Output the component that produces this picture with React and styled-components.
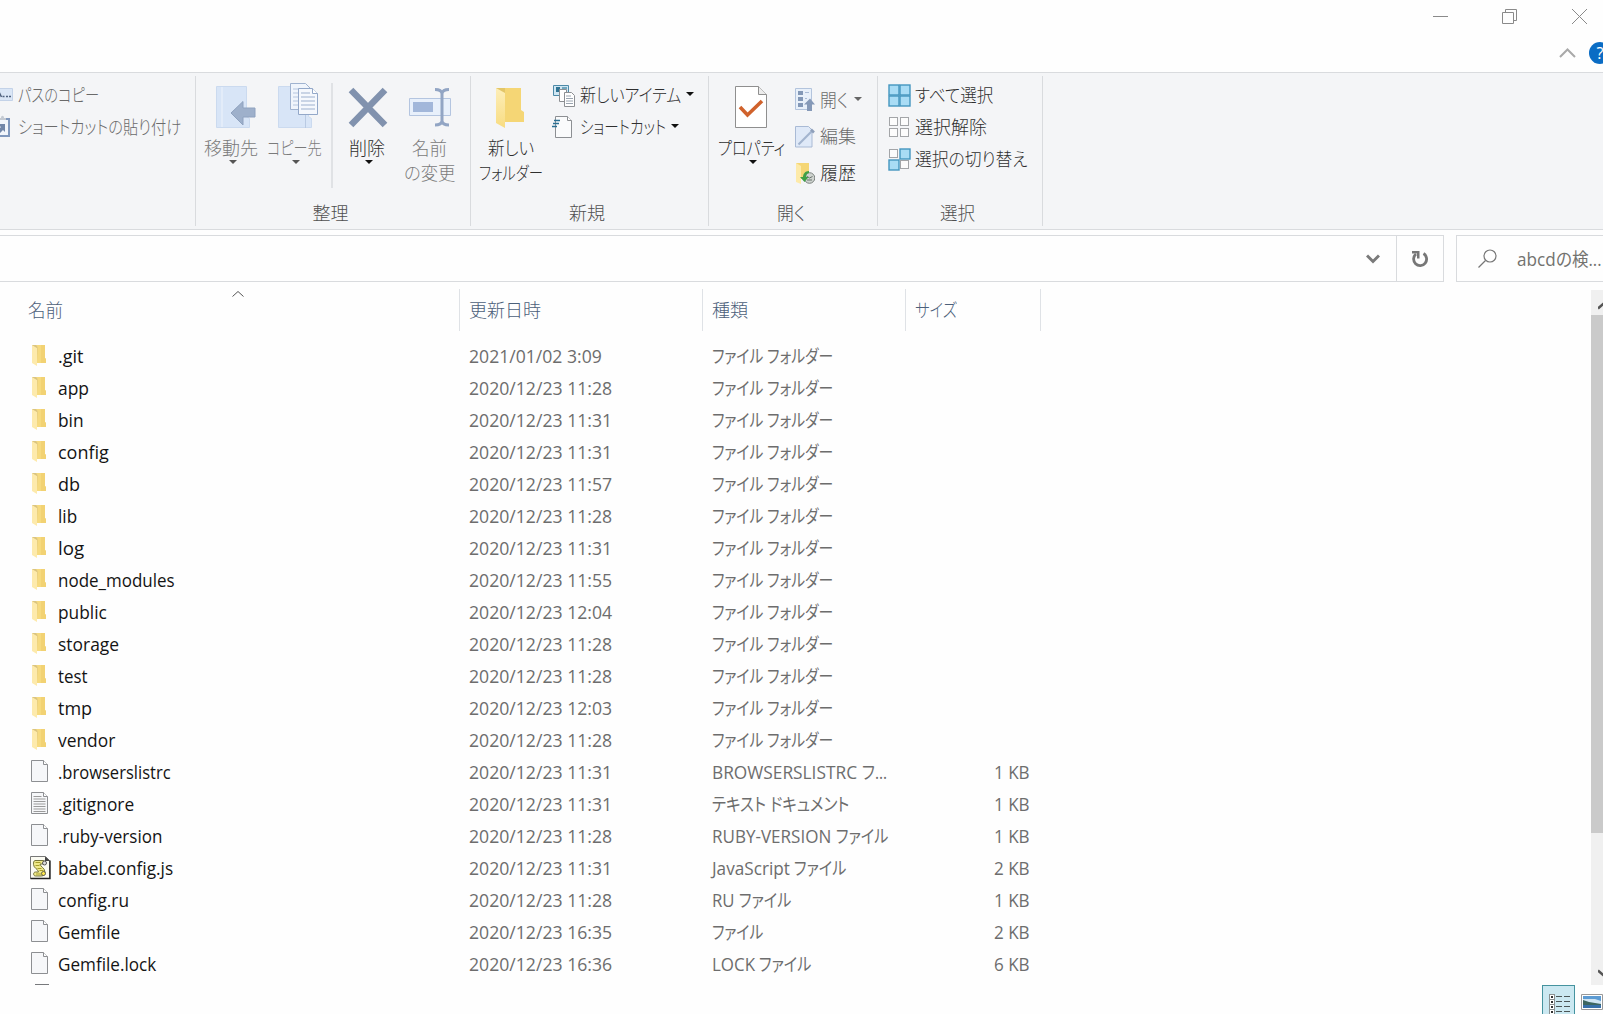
import React, { useLayoutEffect, useRef, useState } from 'react';
import styled, { createGlobalStyle } from 'styled-components';

const colors = {
  text: '#2f2f2f',
  muted: '#6a6a6a',
  disabled: '#7b7b7b',
  detail: '#6d6d6d',
  header: '#4c607a',
  line: '#d9dbde',
  ribbon: '#f4f5f7',
};

const GlobalStyle = createGlobalStyle`
  * {
    box-sizing: border-box;
  }
  body {
    margin: 0;
    background: #fefefe;
    overflow: hidden;
    font-family: 'Open Sans', 'Noto Sans CJK JP', sans-serif;
    font-size: 18px;
    line-height: 25px;
    color: ${colors.text};
  }
  svg {
    display: block;
    flex: none;
  }
`;

const FitBox = styled.span`
  display: inline-block;
  flex: none;
  height: 25px;
  white-space: pre;
  text-align: left;
`;

const FitInner = styled.span`
  display: inline-block;
  transform-origin: 0 50%;
  font-feature-settings: 'palt';
`;

// condenses a label so that it takes exactly the given width
const Fit = ({ width, children }) => {
  const ref = useRef(null);
  const [scale, setScale] = useState(1);

  useLayoutEffect(() => {
    setScale(width / ref.current.offsetWidth);
  }, [width, children]);

  return (
    <FitBox style={{ width }}>
      <FitInner ref={ref} style={{ transform: `scaleX(${scale})` }}>
        {children}
      </FitInner>
    </FitBox>
  );
};

const Window = styled.div`
  width: 1603px;
  height: 1014px;
  display: flex;
  flex-direction: column;
  overflow: hidden;
`;

/* ---------- title bar ---------- */

const TitleBar = styled.header`
  height: 72px;
  flex: none;
`;

const WindowButtons = styled.div`
  display: flex;
  justify-content: flex-end;
  gap: 54px;
  height: 33px;
  padding: 9px 15px 0 0;
`;

const RibbonControls = styled.div`
  display: flex;
  justify-content: flex-end;
  align-items: center;
  gap: 13px;
  height: 40px;
  margin-right: -8px;
`;

const HelpBadge = styled.span`
  width: 22px;
  height: 22px;
  border-radius: 50%;
  background: #0a6cc4;
  color: white;
  font-size: 16px;
  line-height: 22px;
  text-align: center;
`;

/* ---------- ribbon ---------- */

const Ribbon = styled.section`
  display: flex;
  flex: none;
  height: 158px;
  padding: 3px 0;
  background: ${colors.ribbon};
  border-top: 1px solid ${colors.line};
  border-bottom: 1px solid ${colors.line};
  font-weight: 300;
`;

const Group = styled.div`
  display: flex;
  flex-direction: column;
  width: ${({ $width }) => $width}px;
  border-right: 1px solid ${colors.line};
`;

const GroupBody = styled.div`
  display: flex;
  height: 125px;
  padding-left: ${({ $left }) => $left || 0}px;
`;

const GroupLabel = styled.div`
  display: flex;
  justify-content: center;
  padding-right: 5px;
  color: #505050;
`;

const BigButton = styled.div`
  display: flex;
  flex-direction: column;
  align-items: center;
  width: ${({ $width }) => $width}px;
  padding-top: 7px;
  color: ${({ $disabled }) => ($disabled ? colors.disabled : colors.text)};

  > svg:first-child {
    margin-bottom: 3px;
  }

  > svg:last-child {
    margin: -1px 0 0 4px;
  }
`;

const Divider = styled.div`
  width: 2px;
  height: 105px;
  margin: 7px 4px 0 5px;
  background: #e0e2e5;
`;

const SmallColumn = styled.div`
  display: flex;
  flex-direction: column;
  padding-top: ${({ $top }) => $top}px;
  margin-left: ${({ $left }) => $left || 0}px;
`;

const SmallButton = styled.div`
  display: flex;
  align-items: center;
  height: ${({ $height }) => $height || 32}px;
  gap: ${({ $gap }) => $gap || 5}px;
  color: ${({ $muted }) => ($muted ? colors.muted : colors.text)};

  > svg:last-child {
    margin: 0 0 2px 1px;
  }
`;

const Caret = ({ color = '#111' }) => (
  <svg width="8" height="4" viewBox="0 0 8 4">
    <path d="M0 0h8L4 4z" fill={color} />
  </svg>
);

/* ---------- address bar ---------- */

const AddressRow = styled.div`
  display: flex;
  flex: none;
  gap: 12px;
  height: 53px;
  padding-top: 5px;
`;

const AddressBox = styled.div`
  display: flex;
  justify-content: flex-end;
  width: 1444px;
  height: 47px;
  border: 1px solid ${colors.line};
  border-left: 0;
`;

const AddressButton = styled.div`
  display: flex;
  align-items: center;
  justify-content: center;
  width: 47px;
  ${({ $bordered }) => $bordered && `border-left: 1px solid ${colors.line};`}
`;

const SearchBox = styled.div`
  display: flex;
  align-items: center;
  flex: 1;
  height: 47px;
  padding: 1px 0 0 21px;
  border: 1px solid ${colors.line};
  border-right: 0;
  color: #73736f;

  > svg {
    margin: 0 20px 2px 0;
  }
`;

/* ---------- file list ---------- */

const Main = styled.main`
  display: flex;
  flex: none;
  height: 702px;
`;

const ListPane = styled.div`
  flex: 1;
  overflow: hidden;
`;

const ROW_GRID = '460px 243px 203px 135px';

const HeadRow = styled.div`
  display: grid;
  grid-template-columns: ${ROW_GRID};
  height: 42px;
  margin: 6px 0 9px;
  color: ${colors.header};
  font-weight: 300;
`;

const HeadCell = styled.div`
  display: flex;
  align-items: center;
  padding-left: ${({ $first }) => ($first ? 28 : 9)}px;
  border-right: 1px solid #dfe2e6;
`;

const SortMark = styled.svg`
  align-self: flex-start;
  margin: 1px 0 0 169px;
`;

const FileRow = styled.div`
  display: grid;
  grid-template-columns: ${ROW_GRID};
  height: 32px;
  color: ${colors.detail};
`;

const Cell = styled.div`
  display: flex;
  align-items: center;
  padding-left: 9px;
  padding-top: 1px;
`;

const NameCell = styled(Cell)`
  align-items: flex-start;
  padding: 4px 0 0 30px;
  gap: 7px;
  color: #141414;
`;

const SizeCell = styled(Cell)`
  justify-content: flex-end;
  padding-right: 11px;
`;

const ScrollBar = styled.div`
  display: flex;
  flex-direction: column;
  width: 12px;
  margin-top: 7px;
  background: #f0f0f0;
  overflow: hidden;
`;

const ScrollThumb = styled.div`
  height: 518px;
  background: #cacaca;
`;

const ScrollArrow = styled.div`
  height: 25px;
  padding: 11px 0 0 7px;
  ${({ $bottom }) => $bottom && 'margin-top: auto; padding-top: 9px;'}
`;

const StatusBar = styled.footer`
  display: flex;
  justify-content: flex-end;
  flex: 1;
`;

const ViewToggle = styled.div`
  width: 33px;
  height: 34px;
  padding: 7px 0 0 6px;
  background: #cbe8f1;
  border: 1px solid #45939f;
`;

const ThumbToggle = styled.div`
  width: 28px;
  padding: 9px 0 0 6px;
`;

/* ---------- icons ---------- */

const FolderIcon = () => (
  <svg width="21" height="24" viewBox="0 0 21 24">
    <path d="M2 1h13v13l1 1v4H5z" fill="#f6da7f" />
    <path d="M11 1h4v13l1 1v4h-5z" fill="#f2d273" />
    <path d="M2 1l5 3v18l-5-3z" fill="#fdeaac" />
    <path d="M2 1h4l1.500 2v14L7 4z" fill="#d9c483" />
  </svg>
);

const FileIcon = ({ lines }) => (
  <svg width="21" height="24" viewBox="0 0 21 24">
    <path d="M1.500.5h12l4 4v17h-16z" fill="#f6f7f9" stroke="#8d8f92" />
    <path d="M13.500.5v4h4" fill="#fff" stroke="#8d8f92" />
    {lines && (
      <path
        d="M3.500 4.500h8M3.500 7h12M3.500 9.500h12M3.500 12h12M3.500 14.500h12M3.500 17h12M3.500 19.500h12"
        stroke="#9b9b9b"
      />
    )}
  </svg>
);

const ScriptIcon = () => (
  <svg width="21" height="24" viewBox="0 0 21 24">
    <path d="M.5.5h15l4 4v18H.5z" fill="#fbfbf2" stroke="#777" />
    <path d="M.5 22.500h19.500V4.500" fill="none" stroke="#222" strokeWidth="1.400" />
    <path d="M15 .5v4.500h5z" fill="#444" />
    <path
      d="M5 4.500h8.500c1.500 0 2 3 .5 3.500h-4c0 2.500 5 4 5 8 0 3-2 4-4 4H5.500c-2.500 0-2.500-4 0-4H8.500c0-2.500-5-4-5-7.500 0-2 0-3.500 1.500-4z"
      fill="#efe98a"
      stroke="#66662e"
      strokeWidth=".9"
    />
    <path d="M5.500 6.500h5M5.500 9.500h4M7.500 12.500h4M9.500 14.500h4M6 18h5" stroke="#a89f2c" />
    <circle cx="14.500" cy="7" r="2" fill="#ddd" stroke="#444" strokeWidth=".9" />
    <circle cx="13.500" cy="17.500" r="2" fill="#ffe94a" stroke="#444" strokeWidth=".8" />
  </svg>
);

const CutOffIcon = () => (
  <svg width="21" height="24" viewBox="0 0 21 24">
    <path d="M5 .5h14" stroke="#77797c" />
  </svg>
);

const fileIcons = {
  folder: <FolderIcon />,
  file: <FileIcon />,
  text: <FileIcon lines />,
  script: <ScriptIcon />,
};

const CopyPathIcon = () => (
  <svg width="13" height="14" viewBox="0 0 13 14">
    <path d="M-2 .5h14.500v12H-2z" fill="#dae6f6" stroke="#c3d2e8" />
    <path d="M-1 4l2.500 5M2.500 8.500h2M6 8.500h2M9 8.500h2" stroke="#51637f" strokeWidth="1.500" />
  </svg>
);

const PasteShortcutIcon = () => (
  <svg width="13" height="24" viewBox="0 0 13 24">
    <path d="M-2 4H9v17H-2z" fill="#f1f5fb" stroke="#8098bd" strokeWidth="2" />
    <path d="M-1 5V3h2c0-3 3-3 3 0h2v2z" fill="#c5cbd3" />
    <path d="M-3 9h8v8l-2-2-4 4v-5l2-2z" fill="#7186a8" />
  </svg>
);

const MoveToIcon = () => (
  <svg width="62" height="50" viewBox="0 0 62 50">
    <path d="M16.500 3.500h30v30l3 2v9h-33z" fill="#d8e5f7" stroke="#cbdaef" />
    <path d="M22 4v40" stroke="#e3ecf9" strokeWidth="2" />
    <path d="M31 30l12-11.500V25h12v9H43v8z" fill="#9eb0cb" stroke="#8fa2bf" />
  </svg>
);

const CopyToIcon = () => (
  <svg width="64" height="50" viewBox="0 0 64 50">
    <path d="M16.500 3.500h30v30l3 2v9h-33z" fill="#d8e5f7" stroke="#cbdaef" />
    <path d="M43.500 31v14" stroke="#b9cae3" />
    <path d="M28.500.5h15l5 5v21h-20z" fill="#f0f5fc" stroke="#a0b3d0" />
    <path d="M31 6h11M31 10h14M31 14h14M31 18h14M31 22h14" stroke="#b6c6df" />
    <path d="M36.500 5.500h14l5 5v21h-19z" fill="#f5f8fd" stroke="#93a8c9" />
    <path d="M50.500 5.500v5h5" fill="#fff" stroke="#93a8c9" />
    <path d="M39 10h9M39 14h14M39 18h14M39 22h14M39 26h14" stroke="#9db0ce" />
  </svg>
);

const DeleteIcon = () => (
  <svg width="60" height="50" viewBox="0 0 60 50">
    <path d="M14 7l34 35M48 7L14 42" stroke="#8192ae" strokeWidth="6.500" />
  </svg>
);

const RenameIcon = () => (
  <svg width="64" height="50" viewBox="0 0 64 50">
    <path d="M12.500 15.500h41v17h-41z" fill="#e8f0fb" stroke="#b4c5e0" />
    <path d="M16 19h20v10H16z" fill="#a2b7da" />
    <path
      d="M38 6.500c4 0 6.500 1 7 4 .5-3 3-4 7-4M38 42c4 0 6.500-1 7-4 .5 3 3 4 7 4M45 9v31"
      fill="none"
      stroke="#92a5c4"
      strokeWidth="3"
    />
  </svg>
);

const NewFolderIcon = () => (
  <svg width="72" height="50" viewBox="0 0 72 50">
    <defs>
      <linearGradient id="folderFront" x1="0" y1="0" x2="0" y2="1">
        <stop offset="0" stopColor="#fdeeb9" />
        <stop offset="1" stopColor="#f8dc81" />
      </linearGradient>
    </defs>
    <path d="M21 5h25v22l3 2v10H27z" fill="#f5d675" />
    <path d="M21 5h9v34h-6z" fill="#e3c668" />
    <path d="M21 5l9 5v35l-9-5z" fill="url(#folderFront)" />
  </svg>
);

const NewItemIcon = () => (
  <svg width="24" height="24" viewBox="0 0 24 24">
    <path d="M1.500 2.500h15v10h-15z" fill="#cfe6f3" stroke="#4d8aa8" />
    <path d="M4 4h4v5H4z" fill="#2f7494" />
    <path d="M10 5h5" stroke="#6fa7bf" strokeWidth="2" />
    <path d="M7.500 6.500h7v12h-7z" fill="#fff" stroke="#8c8f93" />
    <path d="M12.500 9.500h7l3 3v11h-10z" fill="#fff" stroke="#8c8f93" />
    <path d="M14 13h5M14 15.500h7M14 18h7M14 20.500h7" stroke="#9aa4b0" />
  </svg>
);

const ShortcutIcon = () => (
  <svg width="24" height="24" viewBox="0 0 24 24">
    <path d="M3.500 1.500h12l4 4v17h-16z" fill="#fafbfc" stroke="#8c8f93" />
    <path d="M15.500 1.500v4h4" fill="#fff" stroke="#8c8f93" />
    <path d="M2 5.500h6M1 8.500h6M0 11.500h5" stroke="#2a6f93" strokeWidth="1.500" />
  </svg>
);

const PropertiesIcon = () => (
  <svg width="76" height="50" viewBox="0 0 76 50">
    <path d="M22.500 3.500h23l8 8v33h-31z" fill="#fff" stroke="#8f8f8f" />
    <path d="M45.500 3.500v8h8" fill="#ececec" stroke="#8f8f8f" />
    <path d="M27 24l7.500 8L49 18" fill="none" stroke="#d0622c" strokeWidth="3.600" />
  </svg>
);

const OpenIcon = () => (
  <svg width="20" height="24" viewBox="0 0 20 24">
    <path d="M.5.5h16v21H.5z" fill="#e8f0fa" stroke="#b3c4dd" />
    <path d="M3 3h5v4H3zM3 9h5v4H3zM3 15h5v4H3z" fill="#8398b7" />
    <path d="M10 4.500h4M10 10.500h2" stroke="#a9bbd6" />
    <path d="M15 10.500l5 6h-3V23h-5v-6.500h-3z" fill="#8599b8" />
  </svg>
);

const EditIcon = () => (
  <svg width="20" height="24" viewBox="0 0 20 24">
    <path d="M.5 1.500h13l3.500 3.500v17H.5z" fill="#dfe9f8" stroke="#a9bad5" />
    <path d="M3.500 19.500L17 6" stroke="#a3b4cf" strokeWidth="2.200" />
    <path d="M16 4.500l3 3" stroke="#8e9fba" strokeWidth="2.500" />
  </svg>
);

const HistoryIcon = () => (
  <svg width="20" height="24" viewBox="0 0 20 24">
    <path d="M1 2h13v16H4z" fill="#f5d675" />
    <path d="M1 2l5 3v18l-5-2z" fill="#fdeaa9" />
    <circle cx="14.500" cy="17" r="5.300" fill="#cfd4d0" stroke="#7d8380" />
    <path d="M11.500 15l3 2 3-1.500M12 19h5" fill="none" stroke="#6b726e" />
    <path d="M14 10c-4 0-6 3-6 6H5l4.500 5 4-5H11c0-2 1-3.500 3-4z" fill="#3fa046" />
  </svg>
);

const SelectIcon = ({ filled = [] }) => {
  const spots = [[1, 1], [12, 1], [1, 12], [12, 12]];
  return (
    <svg width="23" height="23" viewBox="0 0 23 23">
      {spots.map(([x, y], i) =>
        filled.includes(i) ? (
          <rect key={i} x={x} y={y} width="10" height="10" fill="#a9dcf5" stroke="#4596bf" strokeWidth="1.400" />
        ) : (
          <rect key={i} x={x + 0.5} y={y + 0.5} width="8" height="8" fill="#fcfcfc" stroke="#a3a5a8" />
        )
      )}
    </svg>
  );
};

const ListViewIcon = () => (
  <svg width="22" height="26" viewBox="0 0 22 26">
    {[1, 6, 11, 16].map((y) => (
      <g key={y}>
        <rect x=".5" y={y + 0.5} width="5" height="5" fill="#fff" stroke="#8a8f90" />
        <rect x="2" y={y + 2} width="2" height="2" fill="#333" />
        <path d={`M7 ${y + 2.5}h6M15 ${y + 2.5}h6`} stroke="#4c5657" />
      </g>
    ))}
  </svg>
);

const ThumbViewIcon = () => (
  <svg width="22" height="16" viewBox="0 0 22 16">
    <path d="M.5.5h21v15H.5z" fill="#fff" stroke="#999" />
    <path d="M2 2h18v12H2z" fill="#5c9bd3" />
    <path d="M2 5h12l6 2v3H2z" fill="#cfe4f2" />
    <path d="M2 6l6 2 12 2v2H2z" fill="#3d6660" />
    <path d="M2 11h18v3H2z" fill="#376fa8" />
  </svg>
);

/* ---------- data ---------- */

const FOLDER = [['ファイル フォルダー', 121]];
const LONG = 143;

const files = [
  { name: '.git', width: 25, date: '2021/01/02 3:09', dateWidth: 133, type: FOLDER },
  { name: 'app', width: 31, date: '2020/12/23 11:28', type: FOLDER },
  { name: 'bin', width: 26, date: '2020/12/23 11:31', type: FOLDER },
  { name: 'config', width: 51, date: '2020/12/23 11:31', type: FOLDER },
  { name: 'db', width: 22, date: '2020/12/23 11:57', type: FOLDER },
  { name: 'lib', width: 19, date: '2020/12/23 11:28', type: FOLDER },
  { name: 'log', width: 26, date: '2020/12/23 11:31', type: FOLDER },
  { name: 'node_modules', width: 117, date: '2020/12/23 11:55', type: FOLDER },
  { name: 'public', width: 49, date: '2020/12/23 12:04', type: FOLDER },
  { name: 'storage', width: 61, date: '2020/12/23 11:28', type: FOLDER },
  { name: 'test', width: 30, date: '2020/12/23 11:28', type: FOLDER },
  { name: 'tmp', width: 34, date: '2020/12/23 12:03', type: FOLDER },
  { name: 'vendor', width: 57, date: '2020/12/23 11:28', type: FOLDER },
  { name: '.browserslistrc', width: 113, date: '2020/12/23 11:31', icon: 'file', type: [['BROWSERSLISTRC ', 150], ['フ...', 25]], size: '1 KB' },
  { name: '.gitignore', width: 76, date: '2020/12/23 11:31', icon: 'text', type: [['テキスト ドキュメント', 137]], size: '1 KB' },
  { name: '.ruby-version', width: 104, date: '2020/12/23 11:28', icon: 'file', type: [['RUBY-VERSION ', 124], ['ファイル', 52]], size: '1 KB' },
  { name: 'babel.config.js', width: 115, date: '2020/12/23 11:31', icon: 'script', type: [['JavaScript ', 82], ['ファイル', 52]], size: '2 KB' },
  { name: 'config.ru', width: 71, date: '2020/12/23 11:28', icon: 'file', type: [['RU ', 27], ['ファイル', 52]], size: '1 KB' },
  { name: 'Gemfile', width: 62, date: '2020/12/23 16:35', icon: 'file', type: [['ファイル', 51]], size: '2 KB' },
  { name: 'Gemfile.lock', width: 98, date: '2020/12/23 16:36', icon: 'file', type: [['LOCK ', 47], ['ファイル', 52]], size: '6 KB' },
];

/* ---------- sections ---------- */

const RibbonSection = () => (
  <Ribbon>
    <Group $width={196}>
      <SmallColumn $top={3}>
        <SmallButton $muted>
          <CopyPathIcon />
          <Fit width={81}>パスのコピー</Fit>
        </SmallButton>
        <SmallButton $muted>
          <PasteShortcutIcon />
          <Fit width={163}>ショートカットの貼り付け</Fit>
        </SmallButton>
      </SmallColumn>
    </Group>

    <Group $width={275}>
      <GroupBody $left={4}>
        <BigButton $width={62} $disabled>
          <MoveToIcon />
          <Fit width={54}>移動先</Fit>
          <Caret color="#555" />
        </BigButton>
        <BigButton $width={64} $disabled>
          <CopyToIcon />
          <Fit width={55}>コピー先</Fit>
          <Caret color="#555" />
        </BigButton>
        <Divider />
        <BigButton $width={60}>
          <DeleteIcon />
          <Fit width={36}>削除</Fit>
          <Caret />
        </BigButton>
        <BigButton $width={64} $disabled>
          <RenameIcon />
          <Fit width={35}>名前</Fit>
          <Fit width={51}>の変更</Fit>
        </BigButton>
      </GroupBody>
      <GroupLabel><Fit width={36}>整理</Fit></GroupLabel>
    </Group>

    <Group $width={238}>
      <GroupBody $left={4}>
        <BigButton $width={72}>
          <NewFolderIcon />
          <Fit width={46}>新しい</Fit>
          <Fit width={64}>フォルダー</Fit>
        </BigButton>
        <SmallColumn $top={3} $left={5}>
          <SmallButton $gap={4}>
            <NewItemIcon />
            <Fit width={101}>新しいアイテム</Fit>
            <Caret />
          </SmallButton>
          <SmallButton $gap={4}>
            <ShortcutIcon />
            <Fit width={86}>ショートカット</Fit>
            <Caret />
          </SmallButton>
        </SmallColumn>
      </GroupBody>
      <GroupLabel><Fit width={36}>新規</Fit></GroupLabel>
    </Group>

    <Group $width={169}>
      <GroupBody $left={4}>
        <BigButton $width={76}>
          <PropertiesIcon />
          <Fit width={67}>プロパティ</Fit>
          <Caret />
        </BigButton>
        <SmallColumn $top={6} $left={6}>
          <SmallButton $height={36.5} $muted>
            <OpenIcon />
            <Fit width={28}>開く</Fit>
            <Caret color="#666" />
          </SmallButton>
          <SmallButton $height={36.5} $muted>
            <EditIcon />
            <Fit width={36}>編集</Fit>
          </SmallButton>
          <SmallButton $height={36.5}>
            <HistoryIcon />
            <Fit width={36}>履歴</Fit>
          </SmallButton>
        </SmallColumn>
      </GroupBody>
      <GroupLabel><Fit width={28}>開く</Fit></GroupLabel>
    </Group>

    <Group $width={165}>
      <GroupBody>
        <SmallColumn $top={3} $left={10}>
          <SmallButton $gap={4}>
            <SelectIcon filled={[0, 1, 2, 3]} />
            <Fit width={78}>すべて選択</Fit>
          </SmallButton>
          <SmallButton $gap={4}>
            <SelectIcon />
            <Fit width={72}>選択解除</Fit>
          </SmallButton>
          <SmallButton $gap={4}>
            <SelectIcon filled={[1, 2]} />
            <Fit width={113}>選択の切り替え</Fit>
          </SmallButton>
        </SmallColumn>
      </GroupBody>
      <GroupLabel><Fit width={35}>選択</Fit></GroupLabel>
    </Group>
  </Ribbon>
);

const FileList = () => (
  <ListPane>
    <HeadRow>
      <HeadCell $first>
        <Fit width={35}>名前</Fit>
        <SortMark width="12" height="8" viewBox="0 0 12 8">
          <path d="M.5 6.500L6 1.500l5.500 5" fill="none" stroke="#555" />
        </SortMark>
      </HeadCell>
      <HeadCell><Fit width={72}>更新日時</Fit></HeadCell>
      <HeadCell><Fit width={36}>種類</Fit></HeadCell>
      <HeadCell><Fit width={42}>サイズ</Fit></HeadCell>
    </HeadRow>
    {files.map((file) => (
      <FileRow key={file.name}>
        <NameCell>
          {fileIcons[file.icon || 'folder']}
          <Fit width={file.width}>{file.name}</Fit>
        </NameCell>
        <Cell>
          <Fit width={file.dateWidth || LONG}>{file.date}</Fit>
        </Cell>
        <Cell>
          {file.type.map(([text, width]) => (
            <Fit key={text} width={width}>{text}</Fit>
          ))}
        </Cell>
        <SizeCell>{file.size && <Fit width={36}>{file.size}</Fit>}</SizeCell>
      </FileRow>
    ))}
    <FileRow>
      <NameCell>
        <CutOffIcon />
      </NameCell>
    </FileRow>
  </ListPane>
);

const App = () => {
  return (
    <>
      <GlobalStyle />
      <Window>
        <TitleBar>
          <WindowButtons>
            <svg width="15" height="15" viewBox="0 0 15 15">
              <path d="M0 7.500h15" stroke="#8a8a8a" />
            </svg>
            <svg width="16" height="15" viewBox="0 0 16 15">
              <path d="M.5 3.500h11v11H.5zM3.500 3.500v-3h11v11h-3" fill="none" stroke="#8a8a8a" />
            </svg>
            <svg width="16" height="15" viewBox="0 0 16 15">
              <path d="M0 0l15 15M15 0L0 15" stroke="#8a8a8a" />
            </svg>
          </WindowButtons>
          <RibbonControls>
            <svg width="17" height="10" viewBox="0 0 17 10">
              <path d="M1 9l7.500-7.500L16 9" fill="none" stroke="#a9a9a9" strokeWidth="2" />
            </svg>
            <HelpBadge>?</HelpBadge>
          </RibbonControls>
        </TitleBar>

        <RibbonSection />

        <AddressRow>
          <AddressBox>
            <AddressButton>
              <svg width="14" height="10" viewBox="0 0 14 10">
                <path d="M1 1.500l6 6 6-6" fill="none" stroke="#7a7a7a" strokeWidth="3" />
              </svg>
            </AddressButton>
            <AddressButton $bordered>
              <svg width="18" height="18" viewBox="0 0 18 18">
                <path d="M12.500 3.500A6.500 6.500 0 1 1 5 4" fill="none" stroke="#777" strokeWidth="2.800" />
                <path d="M1 1h7.500v7.500H6V3.500H1z" fill="#777" />
              </svg>
            </AddressButton>
          </AddressBox>
          <SearchBox>
            <svg width="19" height="19" viewBox="0 0 19 19">
              <circle cx="12" cy="7" r="6" fill="none" stroke="#777" strokeWidth="1.200" />
              <path d="M7.500 11.500L.5 18.500" stroke="#777" strokeWidth="1.300" />
            </svg>
            <Fit width={39}>abcd</Fit>
            <Fit width={46}>の検...</Fit>
          </SearchBox>
        </AddressRow>

        <Main>
          <FileList />
          <ScrollBar>
            <ScrollArrow>
              <svg width="14" height="9" viewBox="0 0 14 9">
                <path d="M0 7.500l7-6 7 6" fill="none" stroke="#555" strokeWidth="2.500" />
              </svg>
            </ScrollArrow>
            <ScrollThumb />
            <ScrollArrow $bottom>
              <svg width="14" height="9" viewBox="0 0 14 9">
                <path d="M0 1.500l7 6 7-6" fill="none" stroke="#555" strokeWidth="2.500" />
              </svg>
            </ScrollArrow>
          </ScrollBar>
        </Main>

        <StatusBar>
          <ViewToggle>
            <ListViewIcon />
          </ViewToggle>
          <ThumbToggle>
            <ThumbViewIcon />
          </ThumbToggle>
        </StatusBar>
      </Window>
    </>
  );
};

export default App;
